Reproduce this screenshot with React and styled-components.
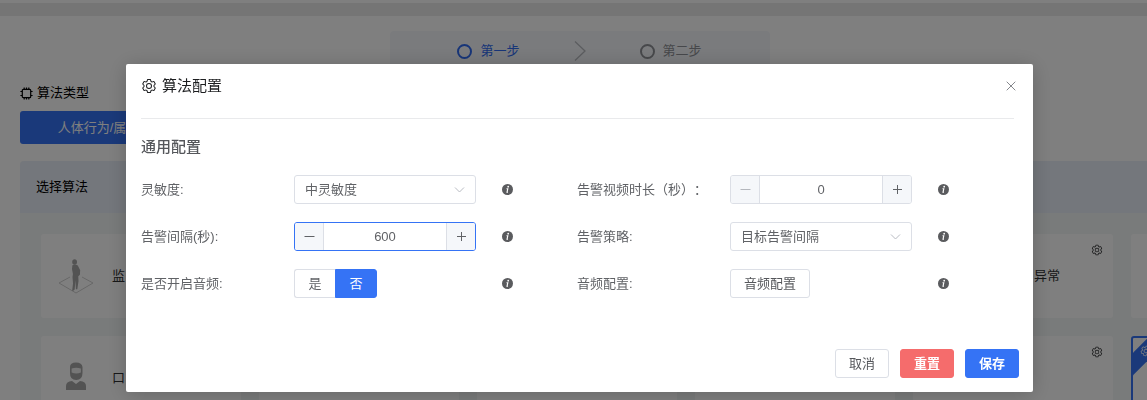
import React, { useState } from "react";
import styled, { createGlobalStyle, css } from "styled-components";

const GlobalStyle = createGlobalStyle`
  *, *::before { box-sizing: border-box; }
  body {
    margin: 0;
    overflow: hidden;
    background: #fff;
    color: #606266;
    font: 13px/20px "Liberation Sans", "Noto Sans CJK SC", sans-serif;
  }
  button, input, select { font: inherit; color: inherit; margin: 0; }
`;

/* ---------- icons ---------- */

const Svg = styled.svg`
  display: block;
  flex: none;
  width: ${(p) => p.$size}px;
  height: ${(p) => p.$size}px;
`;

const GearIcon = ({ size }) => (
  <Svg $size={size} viewBox="0 0 1024 1024" fill="currentColor" aria-hidden="true">
    <path d="M600.704 64a32 32 0 0 1 30.464 22.208l35.2 109.376c14.784 7.232 28.928 15.36 42.432 24.512l112.384-24.192a32 32 0 0 1 34.432 15.36L944.32 364.8a32 32 0 0 1-4.032 37.504l-77.12 85.12a357.12 357.12 0 0 1 0 49.024l77.12 85.248a32 32 0 0 1 4.032 37.504l-88.704 153.6a32 32 0 0 1-34.432 15.296L708.8 803.904c-13.44 9.088-27.648 17.28-42.368 24.512l-35.264 109.376A32 32 0 0 1 600.704 960H423.296a32 32 0 0 1-30.464-22.208L357.696 828.48a351.616 351.616 0 0 1-42.56-24.64l-112.32 24.256a32 32 0 0 1-34.432-15.36L79.68 659.2a32 32 0 0 1 4.032-37.504l77.12-85.248a357.12 357.12 0 0 1 0-48.896l-77.12-85.248A32 32 0 0 1 79.68 364.8l88.704-153.6a32 32 0 0 1 34.432-15.296l112.32 24.256c13.568-9.152 27.776-17.408 42.56-24.64l35.2-109.312A32 32 0 0 1 423.232 64H600.64zm-23.424 64H446.72l-36.352 113.088-24.512 11.968a294.113 294.113 0 0 0-34.816 20.096l-22.656 15.36-116.224-25.088-65.28 113.152 79.68 88.192-1.92 27.136a293.12 293.12 0 0 0 0 40.192l1.92 27.136-79.808 88.192 65.344 113.152 116.224-25.024 22.656 15.296a294.113 294.113 0 0 0 34.816 20.096l24.512 11.968L446.72 896h130.688l36.48-113.152 24.448-11.904a288.282 288.282 0 0 0 34.752-20.096l22.592-15.296 116.288 25.024 65.28-113.152-79.744-88.192 1.92-27.136a293.12 293.12 0 0 0 0-40.256l-1.92-27.136 79.808-88.128-65.344-113.152-116.288 24.96-22.592-15.232a287.616 287.616 0 0 0-34.752-20.096l-24.448-11.904L577.344 128zM512 320a192 192 0 1 1 0 384 192 192 0 0 1 0-384zm0 64a128 128 0 1 0 0 256 128 128 0 0 0 0-256z" />
  </Svg>
);

const CpuIcon = () => (
  <Svg $size={13} viewBox="0 0 13 13" fill="none" stroke="currentColor" strokeWidth="1.2" aria-hidden="true">
    <rect x="2.3" y="2.3" width="8.4" height="8.4" rx="1" />
    <path d="M4.2 2V.4M6.5 2V.4M8.8 2V.4M4.2 12.6V11M6.5 12.6V11M8.8 12.6V11M2 4.5H.4M2 8.5H.4M12.6 4.5H11M12.6 8.5H11" />
  </Svg>
);

const InfoIcon = () => (
  <Svg $size={11} viewBox="0 0 11 11" role="img" aria-label="说明">
    <circle cx="5.5" cy="5.5" r="5.5" fill="#5a5b5e" />
    <circle cx="6.2" cy="2.7" r="0.9" fill="#fff" />
    <path d="M4.5 4.7h1.3L5 8.3h1" fill="none" stroke="#fff" strokeWidth="1.1" />
  </Svg>
);

const CloseIcon = () => (
  <Svg $size={10} viewBox="0 0 10 10" fill="none" stroke="currentColor" aria-hidden="true">
    <path d="M.7.7l8.6 8.6M9.3.7L.7 9.3" />
  </Svg>
);

const SignIcon = ({ plus }) => (
  <Svg $size={11} viewBox="0 0 11 11" fill="none" stroke="currentColor" aria-hidden="true">
    <path d={plus ? "M1 5.5h9M5.5 1v9" : "M.5 5.5h10"} />
  </Svg>
);

const PersonIcon = () => (
  <Svg $size={36} viewBox="0 0 36 36" aria-hidden="true">
    <path d="M12 19L1 25l17 10 17-10-11-6" fill="none" stroke="#cfcfcf" />
    <g fill="#a6a6a6">
      <ellipse cx="16.6" cy="4" rx="2.4" ry="2.8" />
      <path d="M14.4 7.2q3-1.4 5.4.4l2.4 4.6-.3 4.6-1.6 1.4.2 5-1.2 8h-1.4l-.5-9-.7 9.4-1.8 1.4-.7-.6.8-7-.5-6.5.4-3-.9-5z" />
    </g>
  </Svg>
);

const MaskIcon = () => (
  <Svg $size={36} viewBox="0 0 36 36" aria-hidden="true">
    <g fill="#a6a6a6">
      <path d="M12 11V7q0-4.500 6-4.500T24.500 7v6q0 7-6.300 7T12 13z" />
      <path d="M8 30v-4q0-4.500 6-5l4 3 4-3q6 .5 6 5v4z" />
    </g>
    <path d="M13.600 8.500q4.500-1.500 9.300 0v4q-4.500 1.800-9.300 0z" fill="#eee" />
  </Svg>
);

/* ---------- page behind the dialog ---------- */

const Page = styled.div`
  height: 100vh;
  overflow: hidden;
`;

const TopBand = styled.div`
  height: 13px;
  margin: 3px 0 15px;
  background: #ebebeb;
`;

const StepsBar = styled.nav`
  display: flex;
  justify-content: center;
  padding-left: 12px;
`;

const Steps = styled.ol`
  display: flex;
  align-items: center;
  justify-content: center;
  gap: 50px;
  width: 380px;
  height: 40px;
  margin: 0;
  padding: 0;
  list-style: none;
  background: #f4f7fb;
  border-radius: 4px;
`;

const Step = styled.li`
  display: flex;
  align-items: center;
  gap: 8px;
  color: ${(p) => (p.$active ? "#2f6af0" : "#8f9196")};
  &::before {
    content: "";
    width: 15px;
    height: 15px;
    border: 2px solid currentColor;
    border-radius: 50%;
  }
`;

const StepArrow = styled.li`
  display: flex;
  color: #b8babf;
`;

const Content = styled.main`
  padding: 12px 0 0 20px;
`;

const SectionTitle = styled.h2`
  display: flex;
  align-items: center;
  gap: 4px;
  margin: 0 0 8px;
  font-size: 13px;
  font-weight: 400;
  line-height: 20px;
  color: #000;
`;

const TypeTab = styled.button`
  display: block;
  width: 157px;
  height: 33px;
  margin-bottom: 17px;
  padding: 0;
  border: 0;
  border-radius: 3px;
  background: #3573f5;
  color: #fff;
`;

const Panel = styled.section`
  background: #f3f7f6;
  border-radius: 4px 0 0 0;
`;

const PanelHead = styled.h3`
  margin: 0;
  padding: 16px;
  font-size: 13px;
  font-weight: 400;
  line-height: 20px;
  color: #000;
  background: #e9eff9;
  border-radius: 4px 0 0 0;
`;

const Cards = styled.div`
  display: grid;
  grid-template-columns: repeat(6, 200px);
  grid-auto-rows: 84px;
  gap: 18px;
  padding: 21px 0 21px 21px;
`;

const Card = styled.article`
  position: relative;
  display: flex;
  align-items: center;
  gap: 18px;
  padding: 0 17px;
  overflow: hidden;
  background: #fff;
  border-radius: 3px;
  color: #303133;
  ${(p) => p.$selected && css`border: 2px solid #3573f5;`}
`;

const CardName = styled.span`
  ${(p) => p.$end && css`
    flex: 1;
    padding-right: 36px;
    text-align: right;
  `}
`;

const CardGear = styled.button`
  position: absolute;
  top: 10px;
  right: 10px;
  padding: 0;
  border: 0;
  background: none;
`;

const Ribbon = styled.span`
  position: absolute;
  top: 5px;
  left: -33px;
  display: flex;
  justify-content: center;
  width: 92px;
  padding: 2px;
  color: #fff;
  background: #3573f5;
  transform: rotate(-45deg);
`;

/* ---------- dialog ---------- */

const Overlay = styled.div`
  position: fixed;
  inset: 0;
  padding: 64px 114px 0 126px;
  background: rgba(0, 0, 0, 0.5);
`;

const Dialog = styled.section`
  padding: 0 14px 14px 15px;
  background: #fff;
  border-radius: 2px;
  box-shadow: 0 2px 20px rgba(0, 0, 0, 0.2);
`;

const DialogHead = styled.header`
  display: flex;
  align-items: center;
  gap: 5px;
  height: 55px;
  margin-right: 5px;
  padding-bottom: 11px;
  border-bottom: 1px solid #e9eaec;
  color: #1d1e20;
`;

const DialogTitle = styled.h1`
  flex: 1;
  margin: 0;
  font-size: 15px;
  font-weight: 400;
  line-height: 20px;
`;

const CloseButton = styled.button`
  display: flex;
  padding: 4px 0;
  margin: 0 -2px 0 0;
  border: 0;
  background: none;
  color: #85878c;
`;

const GroupTitle = styled.h2`
  margin: 18px 0;
  font-size: 15px;
  font-weight: 500;
  line-height: 20px;
  color: #55575b;
`;

const Form = styled.form`
  display: grid;
  grid-template-columns: repeat(2, 1fr);
  gap: 18px 0;
  margin-right: 6px;
`;

const Field = styled.div`
  display: grid;
  grid-template-columns: 153px 182px 1fr;
  align-items: center;
  height: 29px;
`;

const Label = styled.label`
  white-space: nowrap;
  text-spacing-trim: space-all;
`;

const Hint = styled.span`
  padding-left: 26px;
`;

const SelectWrap = styled.div`
  display: grid;
  align-items: center;
  > * { grid-area: 1 / 1; }
  > svg {
    justify-self: end;
    margin-right: 11px;
    color: #b9bcc3;
    pointer-events: none;
  }
`;

const Select = styled.select`
  width: 100%;
  height: 29px;
  padding: 0 10px;
  appearance: none;
  border: 1px solid #dcdfe6;
  border-radius: 3px;
  background: #fff;
`;

const NumberBox = styled.div`
  display: flex;
  height: 29px;
  overflow: hidden;
  border: 1px solid ${(p) => (p.$focused ? "#3573f5" : "#dcdfe6")};
  border-radius: 3px;
`;

const NumberInput = styled.input`
  flex: 1;
  min-width: 0;
  padding: 0;
  border: solid #dcdfe6;
  border-width: 0 1px;
  outline: 0;
  text-align: center;
`;

const StepButton = styled.button`
  display: flex;
  align-items: center;
  justify-content: center;
  width: 28px;
  padding: 0;
  border: 0;
  background: #f5f7fa;
  color: #606266;
  &:disabled { color: #b4b7bd; }
`;

const RadioGroup = styled.div`
  display: flex;
`;

const RadioItem = styled.label`
  position: relative;
  display: flex;
  align-items: center;
  justify-content: center;
  width: 41px;
  height: 29px;
  border: 1px solid #dcdfe6;
  border-right: 0;
  border-radius: 3px 0 0 3px;
  &:last-child { border-right: 1px solid #dcdfe6; border-radius: 0 3px 3px 0; width: 42px; }
  &&:has(input:checked) {
    border-color: #3573f5;
    background: #3573f5;
    color: #fff;
  }
  input {
    position: absolute;
    inset: 0;
    opacity: 0;
  }
`;

const tones = {
  plain: css`border-color: #dcdfe6; background: #fff; color: #55575b;`,
  danger: css`border-color: #f56c6c; background: #f56c6c; color: #fff; font-weight: 700;`,
  primary: css`border-color: #3573f5; background: #3573f5; color: #fff; font-weight: 700;`,
};

const Button = styled.button`
  height: 29px;
  padding: 0 13px;
  justify-self: start;
  border: 1px solid;
  border-radius: 3px;
  ${(p) => tones[p.$tone || "plain"]}
`;

const DialogFoot = styled.footer`
  display: flex;
  justify-content: flex-end;
  gap: 11px;
  padding-top: 51px;
`;

function SelectField({ id, options }) {
  return (
    <SelectWrap>
      <Select id={id}>
        {options.map((o) => <option key={o}>{o}</option>)}
      </Select>
      <Svg $size={11} viewBox="0 0 11 11" fill="none" stroke="currentColor" aria-hidden="true">
        <path d="M1 3.500l4.500 4.500L10 3.500" />
      </Svg>
    </SelectWrap>
  );
}

function NumberField({ id, initial, focused }) {
  const [value, setValue] = useState(initial);
  return (
    <NumberBox $focused={focused}>
      <StepButton type="button" aria-label="减少" disabled={value <= 0} onClick={() => setValue(value - 1)}>
        <SignIcon />
      </StepButton>
      <NumberInput
        id={id}
        inputMode="numeric"
        value={value}
        onChange={(e) => setValue(Number(e.target.value) || 0)}
      />
      <StepButton type="button" aria-label="增加" onClick={() => setValue(value + 1)}>
        <SignIcon plus />
      </StepButton>
    </NumberBox>
  );
}

const FormRow = ({ id, label, children }) => (
  <Field>
    <Label htmlFor={id}>{label}</Label>
    {children}
    <Hint><InfoIcon /></Hint>
  </Field>
);

const cards = [
  { icon: <PersonIcon />, name: "监" }, {}, {}, {}, { name: "异常", end: true }, {},
  { icon: <MaskIcon />, name: "口" }, {}, {}, {}, {}, { selected: true },
];

export default function App() {
  const [audio, setAudio] = useState("否");
  return (
    <>
      <GlobalStyle />
      <Page>
        <TopBand />
        <StepsBar>
          <Steps>
            <Step $active>第一步</Step>
            <StepArrow>
              <Svg $size={20} viewBox="0 0 20 20" fill="none" stroke="currentColor" strokeWidth="1.300" aria-hidden="true">
                <path d="M5 .5l10 9.500-10 9.500" />
              </Svg>
            </StepArrow>
            <Step>第二步</Step>
          </Steps>
        </StepsBar>
        <Content>
          <SectionTitle><CpuIcon />算法类型</SectionTitle>
          <TypeTab type="button">人体行为/属性</TypeTab>
          <Panel>
            <PanelHead>选择算法</PanelHead>
            <Cards>
              {cards.map((c, i) => (
                <Card key={i} $selected={c.selected}>
                  {c.icon}
                  {c.name && <CardName $end={c.end}>{c.name}</CardName>}
                  {c.selected
                    ? <Ribbon><GearIcon size={12} /></Ribbon>
                    : <CardGear type="button" aria-label="配置"><GearIcon size={12} /></CardGear>}
                </Card>
              ))}
            </Cards>
          </Panel>
        </Content>
      </Page>

      <Overlay>
        <Dialog role="dialog" aria-labelledby="dialog-title">
          <DialogHead>
            <GearIcon size={16} />
            <DialogTitle id="dialog-title">算法配置</DialogTitle>
            <CloseButton type="button" aria-label="关闭"><CloseIcon /></CloseButton>
          </DialogHead>
          <GroupTitle>通用配置</GroupTitle>
          <Form>
            <FormRow id="sensitivity" label="灵敏度:">
              <SelectField id="sensitivity" options={["中灵敏度"]} />
            </FormRow>
            <FormRow id="duration" label="告警视频时长（秒）：">
              <NumberField id="duration" initial={0} />
            </FormRow>
            <FormRow id="interval" label="告警间隔(秒):">
              <NumberField id="interval" initial={600} focused />
            </FormRow>
            <FormRow id="strategy" label="告警策略:">
              <SelectField id="strategy" options={["目标告警间隔"]} />
            </FormRow>
            <FormRow id="audio-yes" label="是否开启音频:">
              <RadioGroup role="radiogroup">
                {["是", "否"].map((v) => (
                  <RadioItem key={v}>
                    <input
                      type="radio"
                      name="audio"
                      id={v === "是" ? "audio-yes" : "audio-no"}
                      checked={audio === v}
                      onChange={() => setAudio(v)}
                    />
                    {v}
                  </RadioItem>
                ))}
              </RadioGroup>
            </FormRow>
            <FormRow id="audio-config" label="音频配置:">
              <Button type="button" id="audio-config">音频配置</Button>
            </FormRow>
          </Form>
          <DialogFoot>
            <Button type="button">取消</Button>
            <Button type="button" $tone="danger">重置</Button>
            <Button type="button" $tone="primary">保存</Button>
          </DialogFoot>
        </Dialog>
      </Overlay>
    </>
  );
}
